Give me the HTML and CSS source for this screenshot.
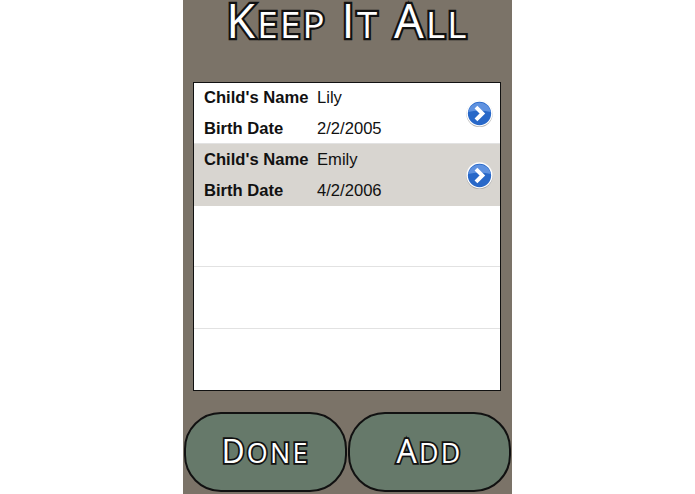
FILE: index.html
```html
<!DOCTYPE html>
<html>
<head>
    <link rel="stylesheet" href="styles.css">
</head>
<body>
    <div class="screen">
        <h1 class="title">K<span class="small">eep</span> I<span class="small">t</span> A<span class="small">ll</span></h1>
        <div class="list">
            <div class="row">
                <div class="info">
                    <div class="line"><span class="label">Child's Name</span><span>Lily</span></div>
                    <div class="line"><span class="label">Birth Date</span><span>2/2/2005</span></div>
                </div>
                <svg class="disclosure" viewBox="0 0 26 26">
                    <circle cx="13" cy="13.4" r="12.6" fill="#a9a9a9"/>
                    <circle cx="13" cy="12.8" r="12.6" fill="#fff"/>
                    <circle cx="13" cy="13" r="11.2" fill="#2868c8"/>
                    <path d="M2 11.6 a11.2 11.2 0 0 1 22 0 q-11 -3 -22 0z" fill="#5f92e0"/>
                    <path d="M9.6 6.8 L15.8 13 L9.6 19.2" fill="none" stroke="#fff" stroke-width="3.8"/>
                </svg>
            </div>
            <div class="row selected">
                <div class="info">
                    <div class="line"><span class="label">Child's Name</span><span>Emily</span></div>
                    <div class="line"><span class="label">Birth Date</span><span>4/2/2006</span></div>
                </div>
                <svg class="disclosure" viewBox="0 0 26 26">
                    <circle cx="13" cy="13.4" r="12.6" fill="#a0a0a0"/>
                    <circle cx="13" cy="12.8" r="12.6" fill="#fff"/>
                    <circle cx="13" cy="13" r="11.2" fill="#2868c8"/>
                    <path d="M2 11.6 a11.2 11.2 0 0 1 22 0 q-11 -3 -22 0z" fill="#5f92e0"/>
                    <path d="M9.6 6.8 L15.8 13 L9.6 19.2" fill="none" stroke="#fff" stroke-width="3.8"/>
                </svg>
            </div>
            <div class="row"></div>
            <div class="row"></div>
            <div class="row"></div>
        </div>
        <div class="buttons">
            <div class="button"><div>D<span class="small">one</span></div></div>
            <div class="button"><div>A<span class="small">dd</span></div></div>
        </div>
    </div>
</body>
</html>
```
FILE: styles.css
```css
html,body{
    margin:0;
    height:100%;
    background-color:white;
}
.screen{
    width:329px;
    height:494px;
    margin-left:183px;
    background-color:#7b7368;
    display:flex;
    flex-direction:column;
    align-items:center;
    overflow:hidden;
}
.title,.button{
    font-family:"Open Sans",sans-serif;
    font-weight:normal;
    color:white;
    paint-order:stroke fill;
}
.small{
    text-transform:uppercase;
}
.title{
    margin:0;
    height:82px;
    font-size:47px;
    line-height:40px;
    letter-spacing:2.3px;
    white-space:nowrap;
    -webkit-text-stroke:4.5px #111;
}
.title .small{
    font-size:.78em;
}
.list{
    width:306.4px;
    height:307px;
    border:1px solid #111;
    background-color:white;
    align-self:flex-start;
    margin-left:10px;
}
.row{
    height:61.4px;
    box-sizing:border-box;
    border-bottom:1px solid #e2e2e2;
    display:flex;
    align-items:center;
    justify-content:space-between;
    padding:0 7px 0 10px;
}
.row:last-child{
    border-bottom:none;
}
.selected{
    background-color:#d8d5d0;
    border-bottom:none;
}
.line{
    display:flex;
    height:31px;
    padding-top:1px;
    box-sizing:border-box;
    align-items:center;
    font-family:"Liberation Sans",sans-serif;
    font-size:16.6px;
    color:#111;
}
.label{
    width:113px;
    font-weight:bold;
}
.disclosure{
    width:27px;
    height:27px;
}
.buttons{
    display:flex;
    gap:1.5px;
    margin-top:21px;
}
.button{
    width:158.5px;
    height:76px;
    border:2.5px solid #111;
    border-radius:37px;
    background-color:#66796a;
    display:flex;
    align-items:center;
    justify-content:center;
    font-size:32px;
    line-height:68px;
    letter-spacing:2.2px;
    -webkit-text-stroke:3.5px #111;
}
.button .small{
    font-size:.84em;
}
```
